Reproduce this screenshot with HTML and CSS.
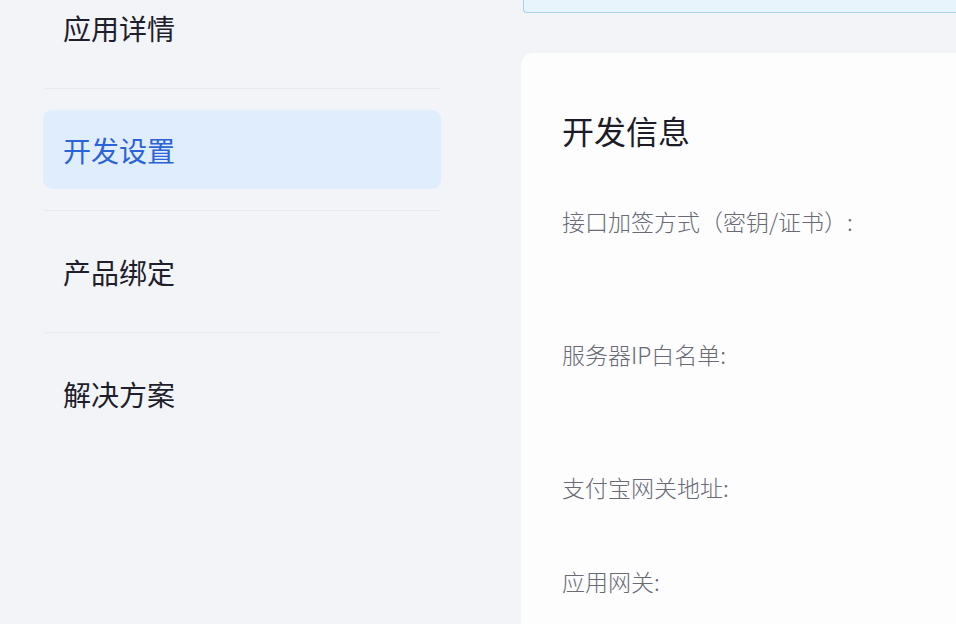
FILE: index.html
```html
<!DOCTYPE html>
<html lang="zh-CN">
<head>
<meta charset="utf-8">
<title>开发设置</title>
<link rel="stylesheet" href="styles.css">
</head>
<body>
<div class="page">
  <nav class="sidebar">
    <div class="nav-item first">应用详情</div>
    <div class="nav-divider"></div>
    <div class="nav-item active">开发设置</div>
    <div class="nav-divider"></div>
    <div class="nav-item">产品绑定</div>
    <div class="nav-divider"></div>
    <div class="nav-item">解决方案</div>
  </nav>
  <main class="main">
    <div class="banner"></div>
    <section class="card">
      <h2 class="card-title">开发信息</h2>
      <div class="field">接口加签方式（密钥/证书）:</div>
      <div class="field">服务器IP白名单:</div>
      <div class="field">支付宝网关地址:</div>
      <div class="field">应用网关:</div>
    </section>
  </main>
</div>
</body>
</html>
```

FILE: styles.css
```css
html, body {
  margin: 0;
  padding: 0;
  height: 100%;
  overflow: hidden;
}

body {
  background: #f3f4f7;
  font-family: "Noto Sans CJK SC", "Noto Sans", sans-serif;
}

.page {
  display: flex;
  height: 624px;
  overflow: hidden;
}

.sidebar {
  width: 521px;
  flex: none;
  padding-left: 43px;
  box-sizing: border-box;
  display: flex;
  flex-direction: column;
}

.nav-item {
  width: 398px;
  height: 79px;
  flex: none;
  display: flex;
  align-items: center;
  padding-left: 20px;
  box-sizing: border-box;
  border-radius: 9px;
  font-size: 28px;
  color: #1e1e2c;
}

.nav-item.first {
  margin-top: -12px;
}

.nav-item.active {
  background: #e0edfc;
  color: #2b63d8;
}

.nav-divider {
  width: 396px;
  margin: 21px 0 21px 2px;
  height: 1px;
  flex: none;
  background: #e8e9ed;
}

.main {
  flex: 1;
  display: flex;
  flex-direction: column;
  min-width: 0;
}

.banner {
  height: 12px;
  margin-left: 2px;
  background: #e7f4fc;
  border: 1px solid #a8d3eb;
  border-top: none;
  border-right: none;
  border-bottom-left-radius: 4px;
  flex: none;
}

.card {
  margin-top: 40px;
  flex: 1;
  background: #fdfdfe;
  border-radius: 12px 0 0 0;
  padding: 57px 0 0 41px;
}

.card-title {
  margin: 0 0 55px;
  font-size: 32px;
  line-height: 40px;
  font-weight: 400;
  color: #1c1c28;
}

.field {
  font-size: 23px;
  line-height: 32px;
  font-weight: 300;
  color: #6a6a74;
  margin-bottom: 101px;
}

.field:nth-of-type(3) {
  margin-bottom: 62px;
}

.field:last-child {
  margin-bottom: 0;
}
```
